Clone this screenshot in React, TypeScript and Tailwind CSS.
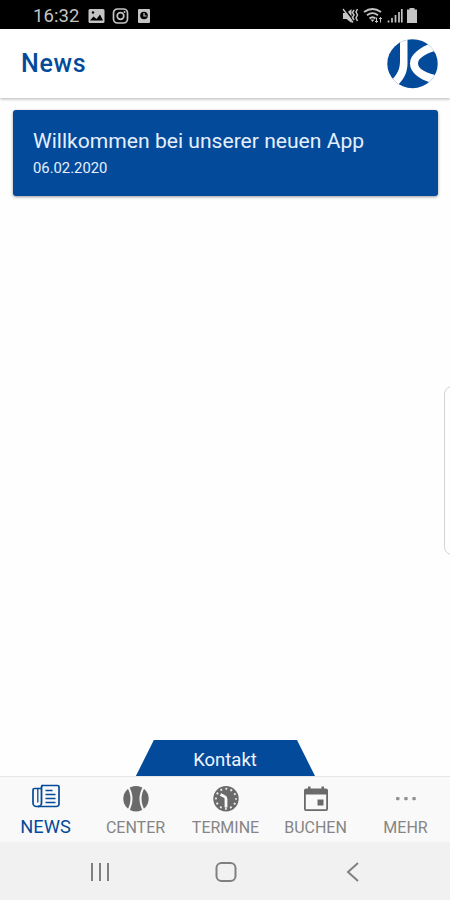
const tabs = [
  { label: "NEWS", icon: NewsIcon, active: true },
  { label: "CENTER", icon: BallIcon, active: false },
  { label: "TERMINE", icon: ClockIcon, active: false },
  { label: "BUCHEN", icon: CalendarIcon, active: false },
  { label: "MEHR", icon: MoreIcon, active: false },
];

function NewsIcon() {
  return (
    <svg width="30" height="26" viewBox="0 0 30 26" fill="none" stroke="currentColor">
      <path
        d="M12 2.500h14.500a1.500 1.500 0 0 1 1.500 1.500v17a2.500 2.500 0 0 1-2.500 2.500H5.500a3.500 3.500 0 0 1-3.500-3.500V7a1.500 1.500 0 0 1 1.500-1.500h6.500"
        strokeWidth="1.700"
      />
      <path d="M12 2.500a1.500 1.500 0 0 0-1.500 1.500v16a3.500 3.500 0 0 1-3.500 3.500" strokeWidth="1.800" />
      <path d="M6.800 5.500v14" strokeWidth="1.300" />
      <path d="M14.500 7.500h7M14.500 11.500h10M14.500 15.500h10M14.500 19.500h10" strokeWidth="1.600" />
    </svg>
  );
}

function BallIcon() {
  return (
    <svg width="28" height="26" viewBox="0 0 28 26">
      <circle cx="14" cy="12.700" r="12.700" fill="currentColor" />
      <path d="M5.500 0q8 12.700 0 26M22.500 0q-8 12.700 0 26" fill="none" stroke="#f9f9f9" strokeWidth="2" />
    </svg>
  );
}

function ClockIcon() {
  return (
    <svg width="28" height="26" viewBox="0 0 28 26">
      <circle cx="14" cy="12.700" r="12.700" fill="currentColor" />
      <circle
        cx="14"
        cy="12.700"
        r="10"
        fill="none"
        stroke="#e8e8e8"
        strokeWidth="2"
        strokeDasharray="1.900 3.336"
        strokeDashoffset="0.950"
      />
      <path
        d="M8.500 8.500L12.500 10.500Q14 11.200 14 13V21.500"
        fill="none"
        stroke="#f9f9f9"
        strokeWidth="2.800"
      />
    </svg>
  );
}

function CalendarIcon() {
  return (
    <svg width="26" height="26" viewBox="0 0 26 26" fill="currentColor">
      <path d="M5 .500h2.500v2h11v-2H21v2h2a2 2 0 0 1 2 2V23a2 2 0 0 1-2 2H3a2 2 0 0 1-2-2V4.500a2 2 0 0 1 2-2h2zM2.800 8.500v14.700h20.400V8.500z" />
      <path d="M14.500 13.500h6v6h-6z" />
    </svg>
  );
}

function MoreIcon() {
  return (
    <svg width="22" height="26" viewBox="0 0 22 26" fill="#929292">
      <rect x="1" y="11" width="3.500" height="3.200" rx="1" />
      <rect x="9.200" y="11" width="3.500" height="3.200" rx="1" />
      <rect x="17.300" y="11" width="3.500" height="3.200" rx="1" />
    </svg>
  );
}

const Logo = () => (
  <svg width="51" height="50" viewBox="0 0 51 50">
    <clipPath id="logo">
      <ellipse cx="25.500" cy="24.700" rx="25.200" ry="24.500" />
    </clipPath>
    <g clipPath="url(#logo)">
      <path d="M0 0h51v50H0z" fill="#034b9a" />
      <path d="M13 0h7.500v24C20.500 32 18 39 11 46L4.500 41.500C10.500 35 13 30 13 22z" fill="#fff" />
      <path
        d="M44.500 4C34 8 23 15 23 24.500S33 40 43 43.500L51 36.500C41 34.500 31 30.500 31 24.500S40 14 51 11z"
        fill="#fff"
      />
    </g>
  </svg>
);

const StatusBar = () => (
  <div className="flex h-[29px] shrink-0 items-center justify-between bg-black pl-[33px] pr-8 pt-[2px] text-[#c4c4c4]">
    <div className="flex items-center">
      <span className="w-[55px] pt-px text-[18.500px] leading-none tracking-[0.1px]">16:32</span>
      <svg width="63" height="16" viewBox="0 0 63 16">
        <rect x="0.500" y="1" width="16" height="14" rx="1.500" fill="#c4c4c4" />
        <path d="M2 12.500l3.500-4 3 2.500 3.500-4.500 3 6z" fill="#000" />
        <circle cx="5" cy="4.500" r="1.200" fill="#000" />
        <rect x="25.500" y="1" width="14" height="14" rx="4" fill="none" stroke="#c4c4c4" strokeWidth="1.700" />
        <circle cx="32.500" cy="8" r="3.300" fill="none" stroke="#c4c4c4" strokeWidth="1.700" />
        <circle cx="36.500" cy="4" r="1" fill="#c4c4c4" />
        <rect x="50" y="1" width="12" height="14" rx="1" fill="#c4c4c4" />
        <circle cx="56" cy="7.500" r="3.800" fill="#000" />
        <path d="M56 5v3h2.500" fill="none" stroke="#c4c4c4" strokeWidth="1.200" />
      </svg>
    </div>
    <svg width="76" height="18" viewBox="0 0 76 18" fill="none" stroke="#c4c4c4">
      <path d="M1 6h3.500l5-4v14l-5-4H1z" fill="#c4c4c4" stroke="none" />
      <path d="M2.500 1.500l9 12" stroke="#000" strokeWidth="1.500" />
      <path d="M1 2l10 13.500" strokeWidth="1.300" />
      <path d="M12 3l-1.500 2.500L12 8l-1.500 2.500L12 13M15.500 2L14 5l1.500 3L14 11l1.500 3" strokeWidth="1.500" />
      <path d="M22 5q8.500-6 17 0M25 8.300q5.500-4.300 11 0M27.500 11.500q3-2.600 6 0" strokeWidth="1.800" />
      <path d="M28.500 12.500h4l-2 2.500z" fill="#c4c4c4" stroke="none" />
      <path d="M34.500 10.500v5m-1.500-1.500l1.500 1.500 1.500-1.500M38.500 15.500v-5m-1.500 1.500l1.500-1.500 1.500 1.500" strokeWidth="1" />
      <path d="M46.500 15.500v-2M50 15.500V11M53.500 15.500V8M57 15.500V5M59.800 15.500V2" strokeWidth="1.700" />
      <path d="M67.500 1h5v1.500H75V16H65V2.500h2.500z" fill="#c4c4c4" stroke="none" />
    </svg>
  </div>
);

const App = () => {
  return (
    <div className="relative flex h-[900px] w-[450px] flex-col overflow-hidden bg-[#fefefe] font-[Roboto,sans-serif]">
      <StatusBar />

      <header className="flex h-[69px] shrink-0 items-center justify-between bg-white pl-[21px] pr-3 shadow-[0_1px_3px_rgba(0,0,0,0.300)]">
        <h1 className="pt-px text-[25px] font-medium tracking-[0.700px] text-[#034b9a]">News</h1>
        <Logo />
      </header>

      <main className="flex-1 pl-[13px] pr-3 pt-3">
        <article className="h-[86px] rounded-[3px] bg-[#034b9a] pl-5 pt-[17px] text-[#e6efff] shadow-[0_1px_3px_rgba(0,0,0,0.400)]">
          <h2 className="text-[21.100px] leading-7">Willkommen bei unserer neuen App</h2>
          <p className="text-[14.800px] leading-[26px]">06.02.2020</p>
        </article>
      </main>

      <div className="absolute left-[444px] top-[386px] h-[169px] w-4 rounded-lg border border-[#d4d4d4]" />

      <button className="h-9 w-[180px] shrink-0 self-center bg-[#034b9a] pt-[5px] text-[18.500px] text-[#f0f4ff] [clip-path:polygon(10.500%_0,90%_0,100%_100%,0.500%_100%)]">
        Kontakt
      </button>

      <nav className="grid h-[66px] shrink-0 grid-cols-5 border-t border-[#e6e6e6] bg-[#f9f9f9]">
        {tabs.map(({ label, icon: Icon, active }) => (
          <div
            key={label}
            className={
              active
                ? "flex flex-col items-center pl-px pt-[6px] text-[#034b9a]"
                : "flex flex-col items-center pl-px pt-[9px] text-[#6a6a6a]"
            }
          >
            <Icon />
            <span
              className={
                active
                  ? "mt-1.5 text-[18.300px] leading-6"
                  : "mt-1 text-[16px] leading-6 text-[#858585]"
              }
            >
              {label}
            </span>
          </div>
        ))}
      </nav>

      <div className="flex h-[58px] shrink-0 items-center justify-between bg-[#f1f1f1] pl-[90px] pr-[91px] pt-[2px]">
        <svg width="20" height="20" viewBox="0 0 20 20" stroke="#808080" strokeWidth="2">
          <path d="M2 1v18M10 1v18M18 1v18" />
        </svg>
        <svg className="-ml-1" width="22" height="22" viewBox="0 0 22 22" fill="none" stroke="#808080" strokeWidth="2">
          <rect x="1.500" y="2" width="19" height="18" rx="5" />
        </svg>
        <svg width="13" height="20" viewBox="0 0 13 20" fill="none" stroke="#808080" strokeWidth="2">
          <path d="M12 1L2 10l10 9" />
        </svg>
      </div>
    </div>
  );
};

export default App;
